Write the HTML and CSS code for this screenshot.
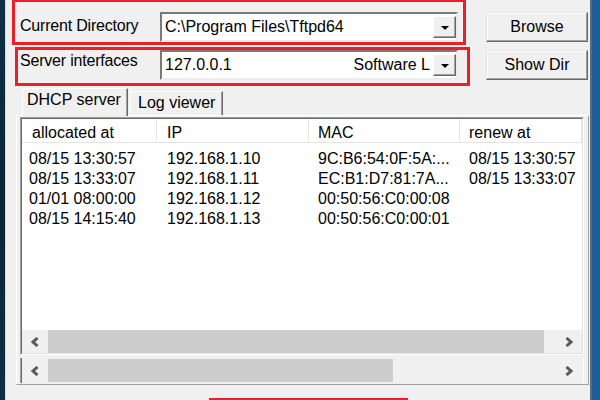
FILE: index.html
```html
<!DOCTYPE html>
<html>
<head>
<meta charset="utf-8">
<title>Tftpd64</title>
<link rel="stylesheet" href="styles.css">
</head>
<body>
<div class="screen">
  <div class="desk desk-left"></div>
  <div class="window">
    <div class="row row-dir">
      <span class="label label-dir">Current Directory</span>
      <div class="combo">
        <span class="combo-text">C:\Program Files\Tftpd64</span>
        <span class="drop"><i class="tri"></i></span>
      </div>
      <button class="btn">Browse</button>
    </div>
    <div class="row row-if">
      <span class="label label-if">Server interfaces</span>
      <div class="combo">
        <span class="combo-text">127.0.0.1</span>
        <span class="combo-extra">Software L</span>
        <span class="drop"><i class="tri"></i></span>
      </div>
      <button class="btn">Show Dir</button>
    </div>

    <div class="tabs">
      <div class="tab tab-active">DHCP server</div>
      <div class="tab tab-log">Log viewer</div>
    </div>

    <div class="panel">
      <div class="lv">
        <div class="lv-inner">
          <div class="lv-head">
            <div class="hc c1">allocated at</div>
            <div class="hc c2">IP</div>
            <div class="hc c3">MAC</div>
            <div class="hc c4">renew at</div>
          </div>
          <div class="lv-body">
            <div class="lv-row"><span class="rc c1">08/15 13:30:57</span><span class="rc c2">192.168.1.10</span><span class="rc c3">9C:B6:54:0F:5A:...</span><span class="rc c4">08/15 13:30:57</span></div>
            <div class="lv-row"><span class="rc c1">08/15 13:33:07</span><span class="rc c2">192.168.1.11</span><span class="rc c3">EC:B1:D7:81:7A...</span><span class="rc c4">08/15 13:33:07</span></div>
            <div class="lv-row"><span class="rc c1">01/01 08:00:00</span><span class="rc c2">192.168.1.12</span><span class="rc c3">00:50:56:C0:00:08</span><span class="rc c4"></span></div>
            <div class="lv-row"><span class="rc c1">08/15 14:15:40</span><span class="rc c2">192.168.1.13</span><span class="rc c3">00:50:56:C0:00:01</span><span class="rc c4"></span></div>
          </div>
          <div class="hscroll">
            <span class="sb-btn"><svg width="10" height="10" viewBox="0 0 10 10"><polyline points="7.5,1 3,5 7.5,9" class="chev"/></svg></span>
            <span class="sb-thumb thumb-long"></span>
            <span class="sb-track"></span>
            <span class="sb-btn"><svg width="10" height="10" viewBox="0 0 10 10"><polyline points="2.5,1 7,5 2.5,9" class="chev"/></svg></span>
          </div>
        </div>
      </div>
      <div class="hscroll hscroll-solo">
        <span class="sb-btn"><svg width="10" height="10" viewBox="0 0 10 10"><polyline points="7.5,1 3,5 7.5,9" class="chev"/></svg></span>
        <span class="sb-thumb thumb-short"></span>
        <span class="sb-track"></span>
        <span class="sb-btn"><svg width="10" height="10" viewBox="0 0 10 10"><polyline points="2.5,1 7,5 2.5,9" class="chev"/></svg></span>
      </div>
    </div>

    <div class="anno anno-1"></div>
    <div class="anno anno-2"></div>
    <div class="anno anno-3"></div>
  </div>
  <div class="desk desk-right"></div>
</div>
</body>
</html>
```

FILE: styles.css
```css
html, body {
  margin: 0;
  padding: 0;
}
body {
  width: 600px;
  height: 400px;
  overflow: hidden;
  font-family: "Liberation Sans", Arial, sans-serif;
  font-size: 16px;
  color: #000;
  background: #0e2b40;
}
.screen {
  display: flex;
  height: 400px;
}
.desk-left {
  width: 5px;
  background: linear-gradient(180deg, #0f3047 0%, #0b2436 50%, #0f2e44 100%);
}
.desk-right {
  flex: 1;
  background: #1f5c9a;
}
.window {
  position: relative;
  width: 587px;
  box-sizing: border-box;
  background: #f0f0f0;
  border-left: 1px solid #d9d9d9;
  border-right: 2px solid #5f6a74;
  padding-top: 12px;
}

/* top rows */
.row {
  display: flex;
  height: 30px;
  padding-left: 14px;
}
.row-if {
  margin-top: 8px;
}
.label {
  width: 140px;
  line-height: 18px;
  white-space: nowrap;
  letter-spacing: -0.2px;
}
.label-dir {
  padding-top: 5px;
}
.label-if {
  padding-top: 2px;
}
.combo {
  width: 298px;
  height: 30px;
  box-sizing: border-box;
  display: flex;
  align-items: center;
  background: #fff;
  border: 2px solid;
  border-color: #7a7a7a #ececec #ececec #7a7a7a;
}
.combo-text {
  padding-left: 3px;
  white-space: nowrap;
}
.combo-extra {
  margin-left: auto;
  margin-right: 3px;
  white-space: nowrap;
}
.combo .combo-text + .drop {
  margin-left: auto;
}
.drop {
  width: 23px;
  height: 22px;
  box-sizing: border-box;
  display: flex;
  align-items: center;
  justify-content: center;
  background: #f0f0f0;
  border: 1px solid;
  border-color: #fff #696969 #696969 #fff;
  box-shadow: inset -1px -1px 0 #a0a0a0;
}
.tri {
  width: 0;
  height: 0;
  border-left: 4px solid transparent;
  border-right: 4px solid transparent;
  border-top: 4px solid #000;
  margin-top: 1px;
}
.btn {
  margin-left: 28px;
  width: 102px;
  height: 30px;
  box-sizing: border-box;
  font-family: "Liberation Sans", Arial, sans-serif;
  font-size: 16px;
  color: #000;
  background: #f0f0f0;
  border: 1px solid;
  border-color: #e3e3e3 #696969 #696969 #e3e3e3;
  box-shadow: inset -1px -1px 0 #a0a0a0, inset 1px 1px 0 #fff;
  padding: 0;
}

/* tabs */
.tabs {
  display: flex;
  align-items: flex-end;
  height: 27px;
  margin-top: 8px;
  margin-left: 10px;
}
.tab {
  box-sizing: border-box;
  height: 24px;
  line-height: 18px;
  padding: 2px 0 0 7px;
  white-space: nowrap;
  background: #f0f0f0;
  border: 1px solid;
  border-bottom: none;
  border-color: #fff #696969 #696969 #fff;
  box-shadow: inset -1px 0 0 #a0a0a0;
}
.tab-active {
  position: relative;
  z-index: 2;
  height: 28px;
  width: 106px;
  margin-left: 6px;
  margin-bottom: -1px;
  padding-left: 4px;
}
.tab-log {
  width: 93px;
  margin-left: 2px;
}

/* panel */
.panel {
  margin-left: 10px;
  width: 573px;
  box-sizing: border-box;
  border: 1px solid;
  border-color: #fff #a0a0a0 #a0a0a0 #fff;
  padding: 1px 4px 1px 3px;
}
.lv {
  width: 564px;
  box-sizing: border-box;
  border: 1px solid;
  border-color: #a0a0a0 #fff #fff #a0a0a0;
}
.lv-inner {
  background: #fff;
  border: 1px solid;
  border-color: #696969 #e3e3e3 #e3e3e3 #696969;
}
.lv-head,
.lv-row {
  display: grid;
  grid-template-columns: 135px 152px 151px 122px;
}
.lv-head {
  height: 24px;
  box-sizing: border-box;
  border-bottom: 1px solid #e5e5e5;
}
.hc {
  box-sizing: border-box;
  border-right: 1px solid #e5e5e5;
  line-height: 18px;
  padding: 5px 0 0 9px;
  white-space: nowrap;
  overflow: hidden;
}
.hc.c1, .hc.c2 {
  padding-left: 10px;
}
.lv-body {
  height: 187px;
  box-sizing: border-box;
  padding-top: 6px;
}
.lv-row {
  line-height: 20px;
}
.rc {
  white-space: nowrap;
  overflow: hidden;
  padding-left: 9px;
}
.rc.c1 {
  padding-left: 7px;
}
.rc.c2 {
  padding-left: 10px;
}

/* scrollbars */
.hscroll {
  display: flex;
  height: 23px;
  background: #f0f0f0;
}
.hscroll-solo {
  width: 564px;
  height: 25px;
  box-sizing: border-box;
  margin-top: 3px;
  padding: 1px;
  border-left: 1px solid #a0a0a0;
  border-right: 1px solid #fff;
  box-shadow: inset 1px 0 0 #696969;
}
.sb-btn {
  width: 26px;
  flex: none;
  display: flex;
  align-items: center;
  justify-content: center;
}
.chev {
  fill: none;
  stroke: #595959;
  stroke-width: 3;
}
.sb-thumb {
  flex: none;
  background: #cdcdcd;
}
.thumb-long {
  width: 496px;
}
.thumb-short {
  width: 345px;
}
.sb-track {
  flex: 1;
}

/* red annotation frames drawn over the screenshot */
.anno {
  position: absolute;
  box-sizing: border-box;
  border: 3px solid #e8202b;
  pointer-events: none;
}
.anno-1 {
  left: 6px;
  top: -1px;
  width: 454px;
  height: 46px;
}
.anno-2 {
  left: 9px;
  top: 47px;
  width: 455px;
  height: 39px;
}
.anno-3 {
  left: 203px;
  top: 398px;
  width: 199px;
  height: 20px;
}
```
